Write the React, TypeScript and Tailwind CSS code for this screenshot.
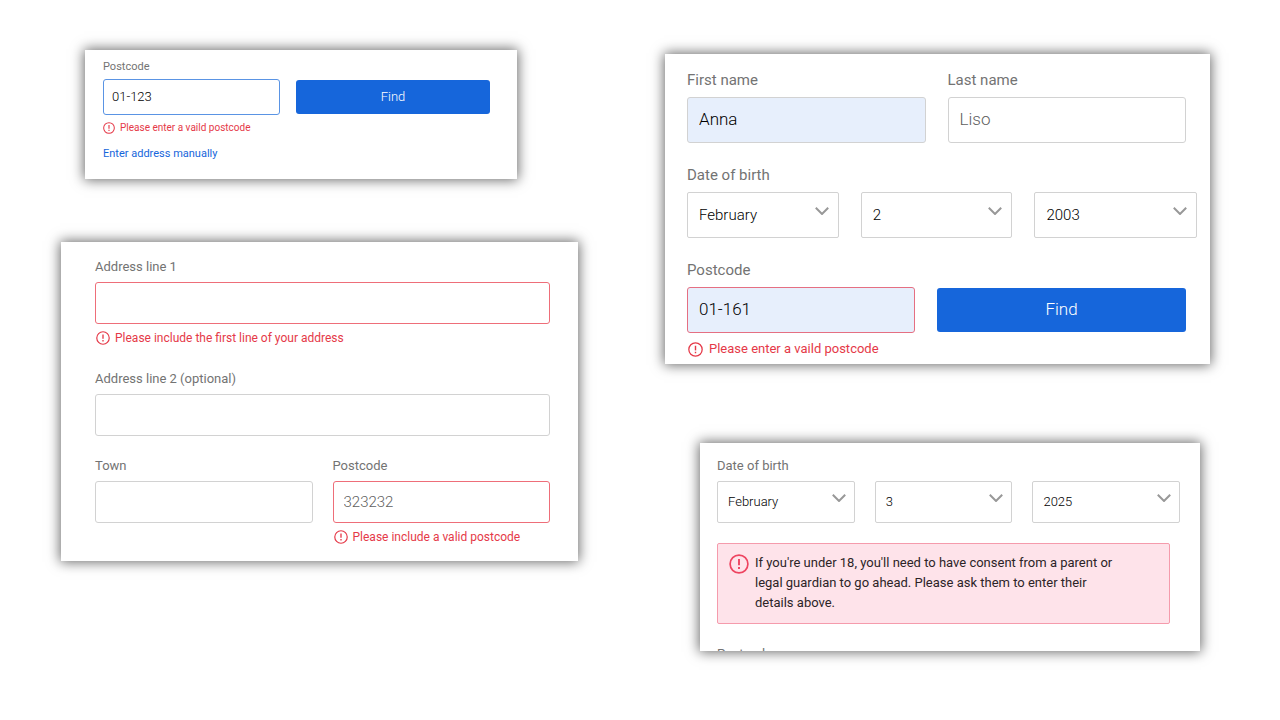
import { useId } from "react";
import type { ReactNode } from "react";
import { clsx } from "clsx";

type Size = "sm" | "md" | "lg";

const labelText: Record<Size, string> = {
  sm: "text-[11px] leading-4",
  md: "text-[13px] leading-5",
  lg: "text-[15px] leading-5",
};

const labelGap: Record<Size, string> = {
  sm: "gap-1",
  md: "gap-[5px]",
  lg: "gap-[7px]",
};

const controlBox: Record<Size, string> = {
  sm: "h-9 px-2 pb-0.5 text-[13px]",
  md: "h-[42px] px-2.5 text-[15px]",
  lg: "h-[46px] px-[11px] pb-0.5 text-[17px]",
};

const selectBox: Record<Size, string> = {
  sm: "h-9 px-2 text-xs",
  md: "h-[42px] px-2.5 text-[13px]",
  lg: "h-[46px] px-[11px] text-[15px]",
};

function AlertIcon({ className }: { className: string }) {
  return (
    <svg viewBox="0 0 20 20" fill="none" stroke="currentColor" aria-hidden="true" className={clsx("shrink-0", className)}>
      <circle cx="10" cy="10" r="8.9" strokeWidth="1.7" />
      <path d="M10 5v6.2" strokeWidth="1.9" />
      <path d="M10 13v2" strokeWidth="1.9" />
    </svg>
  );
}

function Card({ className, children }: { className: string; children: ReactNode }) {
  return (
    <section className={clsx("bg-white shadow-[0_0_12px_1px_rgba(0,0,0,0.6)]", className)}>{children}</section>
  );
}

function ErrorText({ size, children }: { size: Size; children: ReactNode }) {
  return (
    <p
      className={clsx(
        "flex items-center text-[#e53948]",
        size === "sm" && "mt-[5px] gap-[5px] text-[10px] leading-4",
        size === "md" && "mt-1 gap-[5px] pl-px text-xs leading-5",
        size === "lg" && "mt-1.5 gap-1.5 pl-px text-[13px] leading-5",
      )}
    >
      <AlertIcon className={size === "sm" ? "size-3" : size === "md" ? "size-3.5" : "size-[15px]"} />
      {children}
    </p>
  );
}

interface FieldProps {
  label: string;
  size: Size;
  value?: string;
  placeholder?: string;
  border?: string;
  fill?: string;
}

function Field({ label, size, value, placeholder, border = "border-[#d2d2d2]", fill = "bg-white" }: FieldProps) {
  const id = useId();
  return (
    <div className={clsx("flex min-w-0 flex-col", labelGap[size])}>
      <label htmlFor={id} className={clsx("text-[#737373]", labelText[size])}>
        {label}
      </label>
      <input
        id={id}
        type="text"
        defaultValue={value}
        placeholder={placeholder}
        className={clsx(
          "w-full min-w-0 rounded-[3px] border font-light text-black outline-none placeholder:text-[#606060]",
          controlBox[size],
          border,
          fill,
        )}
      />
    </div>
  );
}

function Select({ label, size, value }: { label: string; size: Size; value: string }) {
  return (
    <div className="grid min-w-0">
      <select
        aria-label={label}
        defaultValue={value}
        className={clsx(
          "col-start-1 row-start-1 w-full min-w-0 appearance-none rounded-xs border border-[#d2d2d2] bg-white font-light text-black",
          selectBox[size],
        )}
      >
        <option>{value}</option>
      </select>
      <svg
        viewBox="0 0 14 8"
        fill="none"
        stroke="#989898"
        strokeWidth="2"
        aria-hidden="true"
        className={clsx(
          "pointer-events-none col-start-1 row-start-1 h-2 w-3.5 justify-self-end",
          size === "lg" ? "mt-[15px] mr-2.5" : "mt-[13px] mr-[9px]",
        )}
      >
        <path d="M.8.8 7 7 13.2.8" />
      </svg>
    </div>
  );
}

function DateOfBirth({ size, values, className }: { size: Size; values: [string, string, string]; className: string }) {
  return (
    <fieldset className={className}>
      <legend className={clsx("text-[#737373]", labelText[size], size === "lg" ? "mb-[7px]" : "mb-[5px]")}>
        Date of birth
      </legend>
      <div className={clsx("grid grid-cols-[14fr_14fr_15fr]", size === "lg" ? "gap-[22px]" : "gap-5")}>
        <Select label="Month" size={size} value={values[0]} />
        <Select label="Day" size={size} value={values[1]} />
        <Select label="Year" size={size} value={values[2]} />
      </div>
    </fieldset>
  );
}

function FindButton({ className }: { className: string }) {
  return (
    <button type="button" className={clsx("rounded-[3px] bg-[#1666db] font-light text-white", className)}>
      Find
    </button>
  );
}

export default function App() {
  return (
    <main className="grid min-h-screen grid-cols-2 items-start bg-white font-['Roboto',sans-serif]">
      <div className="flex flex-col gap-[63px] pt-[50px] pr-[62px] pb-16 pl-[61px]">
        <Card className="mr-[61px] ml-6 pt-[9px] pr-[27px] pb-[17px] pl-[18px]">
          <div className="grid grid-cols-[177fr_194fr] items-end gap-4">
            <Field label="Postcode" size="sm" value="01-123" border="border-[#5a94e4]" />
            <FindButton className="mb-px h-[34px] text-[13px]" />
          </div>
          <ErrorText size="sm">Please enter a vaild postcode</ErrorText>
          <a href="#manual" className="mt-2.5 block text-[11px] leading-4 text-[#1666db]">
            Enter address manually
          </a>
        </Card>

        <Card className="pt-[15px] pr-7 pb-3.5 pl-[34px]">
          <Field label="Address line 1" size="md" border="border-[#ee6e79]" />
          <ErrorText size="md">Please include the first line of your address</ErrorText>
          <div className="mt-[21px]">
            <Field label="Address line 2 (optional)" size="md" />
          </div>
          <div className="mt-5 grid grid-cols-2 gap-5">
            <Field label="Town" size="md" />
            <div className="min-w-0">
              <Field label="Postcode" size="md" placeholder="323232" border="border-[#ee6e79]" />
              <ErrorText size="md">Please include a valid postcode</ErrorText>
            </div>
          </div>
        </Card>
      </div>

      <div className="flex flex-col gap-[79px] pt-[54px] pr-[70px] pb-16 pl-[25px]">
        <Card className="pt-4 pr-[13px] pb-[5px] pl-[22px]">
          <div className="mr-[11px] grid grid-cols-2 gap-[22px]">
            <Field label="First name" size="lg" value="Anna" fill="bg-[#e7effc]" />
            <Field label="Last name" size="lg" placeholder="Liso" />
          </div>
          <DateOfBirth size="lg" values={["February", "2", "2003"]} className="mt-[22px]" />
          <div className="mt-[22px] mr-[11px] grid grid-cols-[228fr_249fr] items-end gap-[22px]">
            <Field label="Postcode" size="lg" value="01-161" border="border-[#e56f82]" fill="bg-[#e7effc]" />
            <FindButton className="mb-px h-11 text-[17px]" />
          </div>
          <ErrorText size="lg">Please enter a vaild postcode</ErrorText>
        </Card>

        <Card className="mr-2.5 ml-[35px] pt-[13px] pr-5 pl-[17px]">
          <DateOfBirth size="md" values={["February", "3", "2025"]} className="" />
          <div
            role="alert"
            className="mt-5 mr-2.5 flex gap-1.5 rounded-xs border border-[#f59bac] bg-[#fee3ea] pt-[9px] pr-12 pb-2.5 pl-[11px] text-[13px] leading-5 text-[#2c2427]"
          >
            <AlertIcon className="mt-px size-5 text-[#ee4460]" />
            <p>
              If you're under 18, you'll need to have consent from a parent or legal guardian to go ahead. Please ask
              them to enter their details above.
            </p>
          </div>
          <div className="mt-5 h-[7px] overflow-hidden text-[13px] leading-5 text-[#737373]">Postcode</div>
        </Card>
      </div>
    </main>
  );
}
